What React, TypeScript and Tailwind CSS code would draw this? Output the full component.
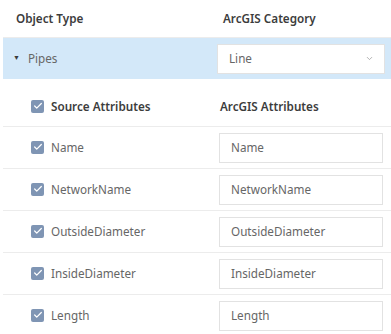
import { Check, ChevronDown } from 'lucide-react';

const attributes = ['Name', 'NetworkName', 'OutsideDiameter', 'InsideDiameter', 'Length'];

const CheckBox = () => (
  <span className="flex h-[13px] w-[13px] items-center justify-center rounded-[2px] bg-[#7f95b4]">
    <Check className="h-[10px] w-[10px] text-white" strokeWidth={3} />
  </span>
);

const App = () => {
  return (
    <div className="w-[391px] h-[334px] overflow-hidden bg-white pl-[3px] font-['Noto_Sans',sans-serif] text-[11.7px]">
      {/* header */}
      <div className="flex h-[38px] items-center border-b border-[#ececec] font-semibold text-[#3c3c3c]">
        <div className="w-[214px] pl-[13px]">Object Type</div>
        <div className="pl-[6px]">ArcGIS Category</div>
      </div>

      {/* selected object row */}
      <div className="flex h-[41px] items-center bg-[#d3e8f9]">
        <div className="flex w-[214px] items-center pl-[10px] text-[#666666]">
          <span className="mr-[8px] text-[7px] text-[#3c3c3c]">▼</span>
          Pipes
        </div>
        <div className="flex h-[30px] w-[168px] items-center justify-between border border-[#e2e2e2] bg-white pl-[11px] pr-[10px] text-[#666666]">
          <span>Line</span>
          <ChevronDown className="h-[9px] w-[9px] text-[#9a9a9a]" strokeWidth={2} />
        </div>
      </div>

      {/* attribute header */}
      <div className="flex h-[47px] items-center pt-[8px] font-semibold text-[#3c3c3c]">
        <div className="flex w-[214px] items-center gap-[7px] pl-[28px]">
          <CheckBox />
          Source Attributes
        </div>
        <div className="pl-[3px]">ArcGIS Attributes</div>
      </div>

      {attributes.map((attr) => (
        <div key={attr} className="flex h-[42px] items-center border-t border-[#ececec] text-[#666666]">
          <div className="flex w-[214px] items-center gap-[7px] pl-[28px]">
            <CheckBox />
            {attr}
          </div>
          <div className="ml-[2px] flex h-[30px] w-[164px] items-center border border-[#e2e2e2] pl-[11px]">
            {attr}
          </div>
        </div>
      ))}
    </div>
  );
};

export default App;
